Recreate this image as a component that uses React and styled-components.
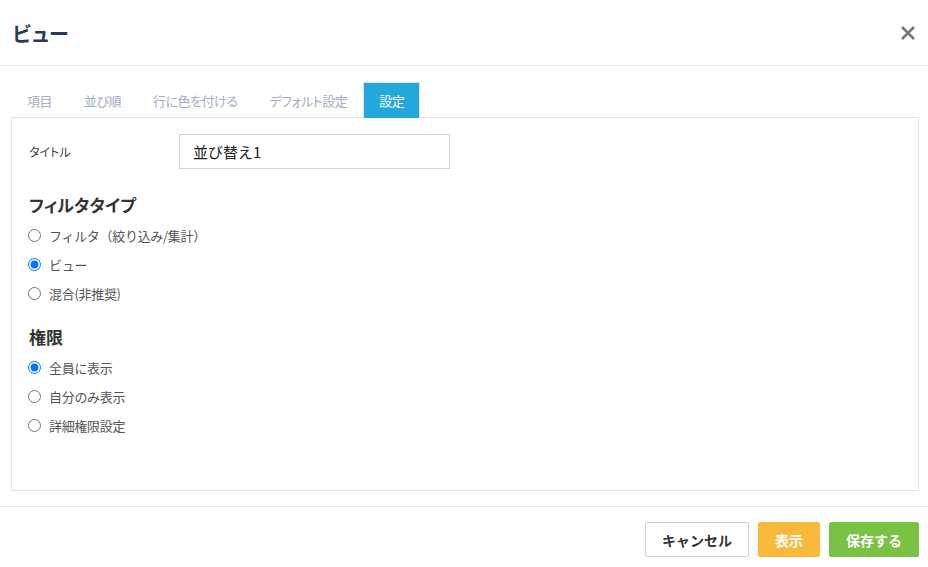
import React, { useState } from "react";
import styled, { createGlobalStyle } from "styled-components";

const Global = createGlobalStyle`
  html, body { margin: 0; padding: 0; background: #fff; }
  body {
    font-family: "Noto Sans CJK JP", "Noto Sans", sans-serif;
    color: #333;
  }
  #root { width: 928px; height: 567px; }
`;

const Dialog = styled.div`
  width: 928px;
  height: 567px;
  display: flex;
  flex-direction: column;
  background: #fff;
`;

const Header = styled.div`
  height: 66px;
  box-sizing: border-box;
  border-bottom: 1px solid #e3e6ec;
  display: flex;
  align-items: center;
  justify-content: space-between;
  padding: 1px 11px 0 12px;
`;

const Title = styled.h1`
  margin: 0;
  font-size: 20px;
  font-weight: 700;
  color: #2b3a55;
  letter-spacing: -1.5px;
`;

const CloseButton = styled.button`
  border: none;
  background: none;
  padding: 0;
  width: 18px;
  height: 18px;
  display: flex;
  align-items: center;
  justify-content: center;
  cursor: pointer;
`;

const Body = styled.div`
  padding: 16px 9px 0 11px;
  display: flex;
  flex-direction: column;
`;

const Tabs = styled.div`
  display: flex;
  height: 36px;
  margin-bottom: -1px;
  position: relative;
  z-index: 1;
`;

const Tab = styled.div`
  padding: 0 ${(p) => (p.$active ? 15 : 16)}px;
  display: flex;
  align-items: center;
  font-size: 13px;
  letter-spacing: -0.5px;
  font-feature-settings: "palt";
  color: ${(p) => (p.$active ? "#fff" : "#a5acc6")};
  background: ${(p) => (p.$active ? "#22a9da" : "transparent")};
  border: ${(p) => (p.$active ? "1px solid #dfe3ea" : "none")};
  border-bottom: none;
  cursor: pointer;
`;

const Panel = styled.div`
  border: 1px solid #e0e4ea;
  height: 374px;
  box-sizing: border-box;
  padding: 16px 17px 0 17px;
  display: flex;
  flex-direction: column;
`;

const FieldRow = styled.div`
  display: flex;
  align-items: center;
`;

const FieldLabel = styled.label`
  width: 150px;
  font-size: 12px;
  font-feature-settings: "palt";
  color: #444;
`;

const TextInput = styled.input`
  width: 271px;
  height: 35px;
  box-sizing: border-box;
  border: 1px solid #d3d3d3;
  padding: 0 13px;
  font-family: "Noto Sans CJK JP", sans-serif;
  font-size: 15px;
  color: #222;
  outline: none;
`;

const Section = styled.div`
  display: flex;
  flex-direction: column;
  margin-top: ${(p) => p.$top}px;
`;

const SectionTitle = styled.h2`
  margin: 0 0 4px;
  font-size: 17px;
  font-weight: 700;
  color: #333;
  line-height: 24px;
  font-feature-settings: "palt";
`;

const RadioRow = styled.label`
  display: flex;
  align-items: center;
  height: 29px;
  font-size: 13px;
  letter-spacing: -0.3px;
  color: #555;
  cursor: pointer;
`;

const Radio = styled.input`
  width: 13px;
  height: 13px;
  margin: 0 8px 0 -1px;
`;

const Footer = styled.div`
  margin-top: 15px;
  border-top: 1px solid #e3e6ec;
  padding: 15px 9px 0 0;
  display: flex;
  justify-content: flex-end;
  gap: 9px;
`;

const Button = styled.button`
  height: 35px;
  padding: 0 16px;
  font-family: "Noto Sans CJK JP", sans-serif;
  font-size: 14px;
  font-weight: 700;
  border-radius: 2px;
  cursor: pointer;
  color: ${(p) => (p.$variant === "default" ? "#333" : "#fff")};
  background: ${(p) =>
    p.$variant === "warning" ? "#f9b93b" : p.$variant === "success" ? "#7ac244" : "#fff"};
  border: 1px solid ${(p) =>
    p.$variant === "warning" ? "#f9b93b" : p.$variant === "success" ? "#7ac244" : "#cfcfcf"};
`;

const tabs = ["項目", "並び順", "行に色を付ける", "デフォルト設定", "設定"];

export default function App() {
  const [filter, setFilter] = useState("view");
  const [perm, setPerm] = useState("all");
  return (
    <Dialog>
      <Global />
      <Header>
        <Title>ビュー</Title>
        <CloseButton aria-label="close">
          <svg width="16" height="16" viewBox="0 0 16 16">
            <path d="M2 2 L14 14 M14 2 L2 14" stroke="#777" strokeWidth="2.6" strokeLinecap="butt" />
          </svg>
        </CloseButton>
      </Header>
      <Body>
        <Tabs>
          {tabs.map((t) => (
            <Tab key={t} $active={t === "設定"}>
              {t}
            </Tab>
          ))}
        </Tabs>
        <Panel>
          <FieldRow>
            <FieldLabel>タイトル</FieldLabel>
            <TextInput defaultValue="並び替え1" />
          </FieldRow>
          <Section $top={24}>
            <SectionTitle>フィルタタイプ</SectionTitle>
            <RadioRow>
              <Radio type="radio" name="ft" checked={filter === "filter"} onChange={() => setFilter("filter")} />
              フィルタ（絞り込み/集計）
            </RadioRow>
            <RadioRow>
              <Radio type="radio" name="ft" checked={filter === "view"} onChange={() => setFilter("view")} />
              ビュー
            </RadioRow>
            <RadioRow>
              <Radio type="radio" name="ft" checked={filter === "mix"} onChange={() => setFilter("mix")} />
              混合(非推奨)
            </RadioRow>
          </Section>
          <Section $top={17}>
            <SectionTitle>権限</SectionTitle>
            <RadioRow>
              <Radio type="radio" name="pm" checked={perm === "all"} onChange={() => setPerm("all")} />
              全員に表示
            </RadioRow>
            <RadioRow>
              <Radio type="radio" name="pm" checked={perm === "self"} onChange={() => setPerm("self")} />
              自分のみ表示
            </RadioRow>
            <RadioRow>
              <Radio type="radio" name="pm" checked={perm === "detail"} onChange={() => setPerm("detail")} />
              詳細権限設定
            </RadioRow>
          </Section>
        </Panel>
      </Body>
      <Footer>
        <Button $variant="default">キャンセル</Button>
        <Button $variant="warning">表示</Button>
        <Button $variant="success">保存する</Button>
      </Footer>
    </Dialog>
  );
}
